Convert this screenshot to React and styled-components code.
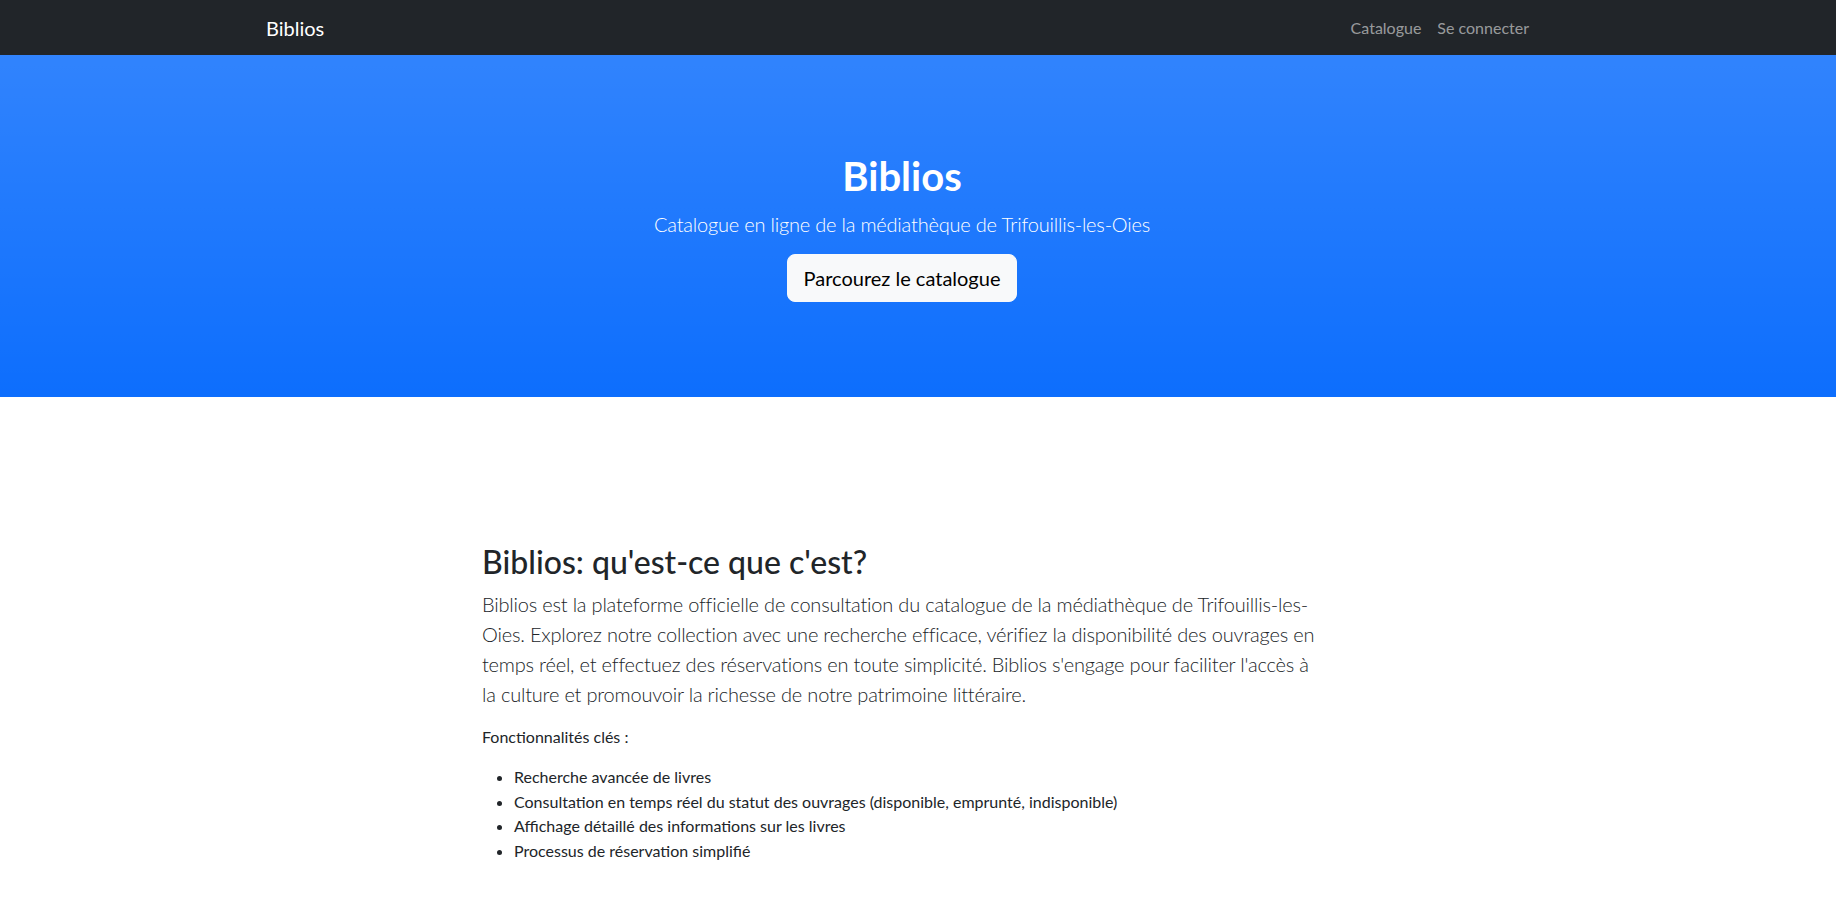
import React from "react";
import styled, { createGlobalStyle } from "styled-components";

const GlobalStyle = createGlobalStyle`
  *, *::before, *::after { box-sizing: border-box; }
  body {
    margin: 0;
    font-family: Lato, "Open Sans", sans-serif;
    font-size: 16px;
    line-height: 1.5;
    color: #212529;
    background: #fff;
    -webkit-font-smoothing: antialiased;
  }
`;

const Container = styled.div`
  width: 1296px;
  max-width: calc(100% - 24px);
  margin-left: calc((100% - 1328px) / 2);
  padding: 0 12px;
`;

const NavBar = styled.nav`
  background: #212529;
  height: 55px;
`;

const NavInner = styled(Container)`
  height: 100%;
  display: flex;
  align-items: center;
  justify-content: space-between;
`;

const Brand = styled.a`
  color: #fff;
  font-size: 20px;
  line-height: 30px;
  text-decoration: none;
`;

const NavLinks = styled.ul`
  display: flex;
  list-style: none;
  margin: 0 1px 0 0;
  padding: 0;
`;

const NavLink = styled.a`
  display: block;
  padding: 8px;
  color: rgba(255, 255, 255, 0.55);
  text-decoration: none;
  font-size: 16px;
  line-height: 24px;
`;

const Hero = styled.header`
  background-color: #0d6efd;
  background-image: linear-gradient(180deg, rgba(255, 255, 255, 0.15), rgba(255, 255, 255, 0));
  padding: 97px 0 95px;
  color: #fff;
`;

const HeroInner = styled(Container)`
  text-align: center;
`;

const HeroTitle = styled.h1`
  margin: 0 0 9px;
  font-size: 40px;
  font-weight: 700;
  line-height: 1.2;
`;

const Lead = styled.p`
  margin: 0 0 ${(p) => (p.$tight ? 15 : 16)}px;
  font-size: 20px;
  font-weight: 300;
  line-height: 1.5;
  letter-spacing: -0.2px;
  color: ${(p) => p.$color || "inherit"};
`;

const LightButton = styled.a`
  display: inline-block;
  padding: 8px 16px;
  font-size: 20px;
  line-height: 30px;
  color: #000;
  background: #f8f9fa;
  border: 1px solid #f8f9fa;
  border-radius: 8px;
  text-decoration: none;
`;

const Section = styled.section`
  padding: 146px 0 48px;
`;

const Row = styled.div`
  display: grid;
  grid-template-columns: repeat(12, 1fr);
  margin: 0 -12px;
`;

const Col = styled.div`
  grid-column: 3 / span 8;
  padding: 0 12px;
`;

const Heading = styled.h2`
  margin: 0 0 8px;
  font-size: 32px;
  font-weight: 500;
  line-height: 1.2;
`;

const Text = styled.p`
  margin: 0 0 16px;
`;

const List = styled.ul`
  margin: 0 0 16px;
  padding-left: 32px;
  li { line-height: 24.5px; }
`;

export default function App() {
  return (
    <>
      <GlobalStyle />
      <NavBar>
        <NavInner>
          <Brand href="#">Biblios</Brand>
          <NavLinks>
            <li><NavLink href="#">Catalogue</NavLink></li>
            <li><NavLink href="#">Se connecter</NavLink></li>
          </NavLinks>
        </NavInner>
      </NavBar>
      <Hero>
        <HeroInner>
          <HeroTitle>Biblios</HeroTitle>
          <Lead $tight>Catalogue en ligne de la médiathèque de Trifouillis-les-Oies</Lead>
          <LightButton href="#">Parcourez le catalogue</LightButton>
        </HeroInner>
      </Hero>
      <Section>
        <Container>
          <Row>
            <Col>
              <Heading>Biblios: qu'est-ce que c'est?</Heading>
              <Lead $color="#212529">
                Biblios est la plateforme officielle de consultation du catalogue de la médiathèque de
                Trifouillis-les-Oies. Explorez notre collection avec une recherche efficace, vérifiez la
                disponibilité des ouvrages en temps réel, et effectuez des réservations en toute simplicité.
                Biblios s'engage pour faciliter l'accès à la culture et promouvoir la richesse de notre
                patrimoine littéraire.
              </Lead>
              <Text>Fonctionnalités clés :</Text>
              <List>
                <li>Recherche avancée de livres</li>
                <li>Consultation en temps réel du statut des ouvrages (disponible, emprunté, indisponible)</li>
                <li>Affichage détaillé des informations sur les livres</li>
                <li>Processus de réservation simplifié</li>
              </List>
            </Col>
          </Row>
        </Container>
      </Section>
    </>
  );
}
